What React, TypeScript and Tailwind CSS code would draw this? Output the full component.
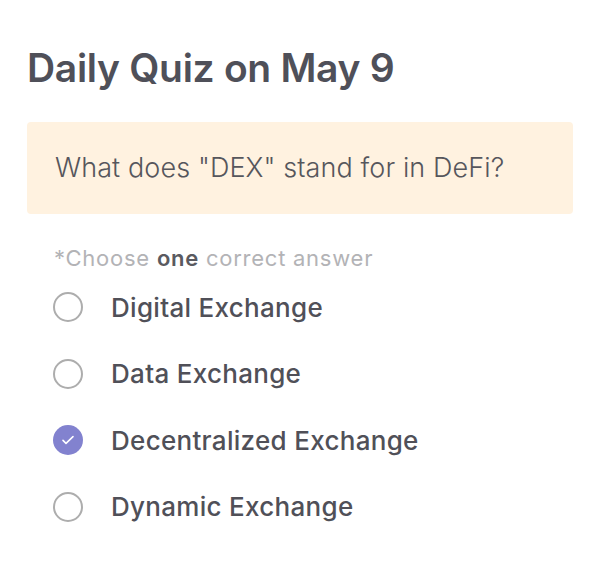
import React, { useState } from 'react';

const options = ['Digital Exchange', 'Data Exchange', 'Decentralized Exchange', 'Dynamic Exchange'];

const App: React.FC = () => {
    const [selected, setSelected] = useState(2);

    return (
        <div className="w-[600px] h-[577px] bg-white px-[27px] pt-[44px]" style={{ fontFamily: 'Inter, "Noto Sans", sans-serif' }}>
            <h1 className="text-[39px] leading-[48px] font-semibold text-[#4f5059] tracking-[-0.3px]">Daily Quiz on May 9</h1>

            {/* Question */}
            <div className="mt-[30px] h-[92px] bg-[#fff2e0] rounded-[4px] flex items-center px-[28px]">
                <p className="text-[27px] font-light text-[#56565c] tracking-[0.1px]">What does "DEX" stand for in DeFi?</p>
            </div>

            <p className="mt-[30px] ml-[27px] text-[22px] leading-[28px] text-[#b3b3b6] tracking-[0.75px]">
                *Choose <span className="font-semibold text-[#5a5a60]">one</span> correct answer
            </p>

            <div className="mt-[2px] ml-[26px] flex flex-col">
                {options.map((opt, i) => (
                    <button key={i} onClick={() => setSelected(i)} className="h-[66.5px] flex items-center gap-[28px] text-left">
                        {selected === i ? (
                            <span className="w-[30px] h-[30px] rounded-full bg-[#8282cf] flex items-center justify-center">
                                <svg width="16" height="16" viewBox="0 0 24 24" fill="none" stroke="white" strokeWidth="2.4" strokeLinecap="round" strokeLinejoin="round">
                                    <path d="M4.5 12.5l4.5 4.5L19.5 7" />
                                </svg>
                            </span>
                        ) : (
                            <span className="w-[30px] h-[30px] rounded-full border-2 border-[#adadad]" />
                        )}
                        <span className="text-[26px] font-medium text-[#505058] tracking-[0.3px]">{opt}</span>
                    </button>
                ))}
            </div>
        </div>
    );
};

export default App;
